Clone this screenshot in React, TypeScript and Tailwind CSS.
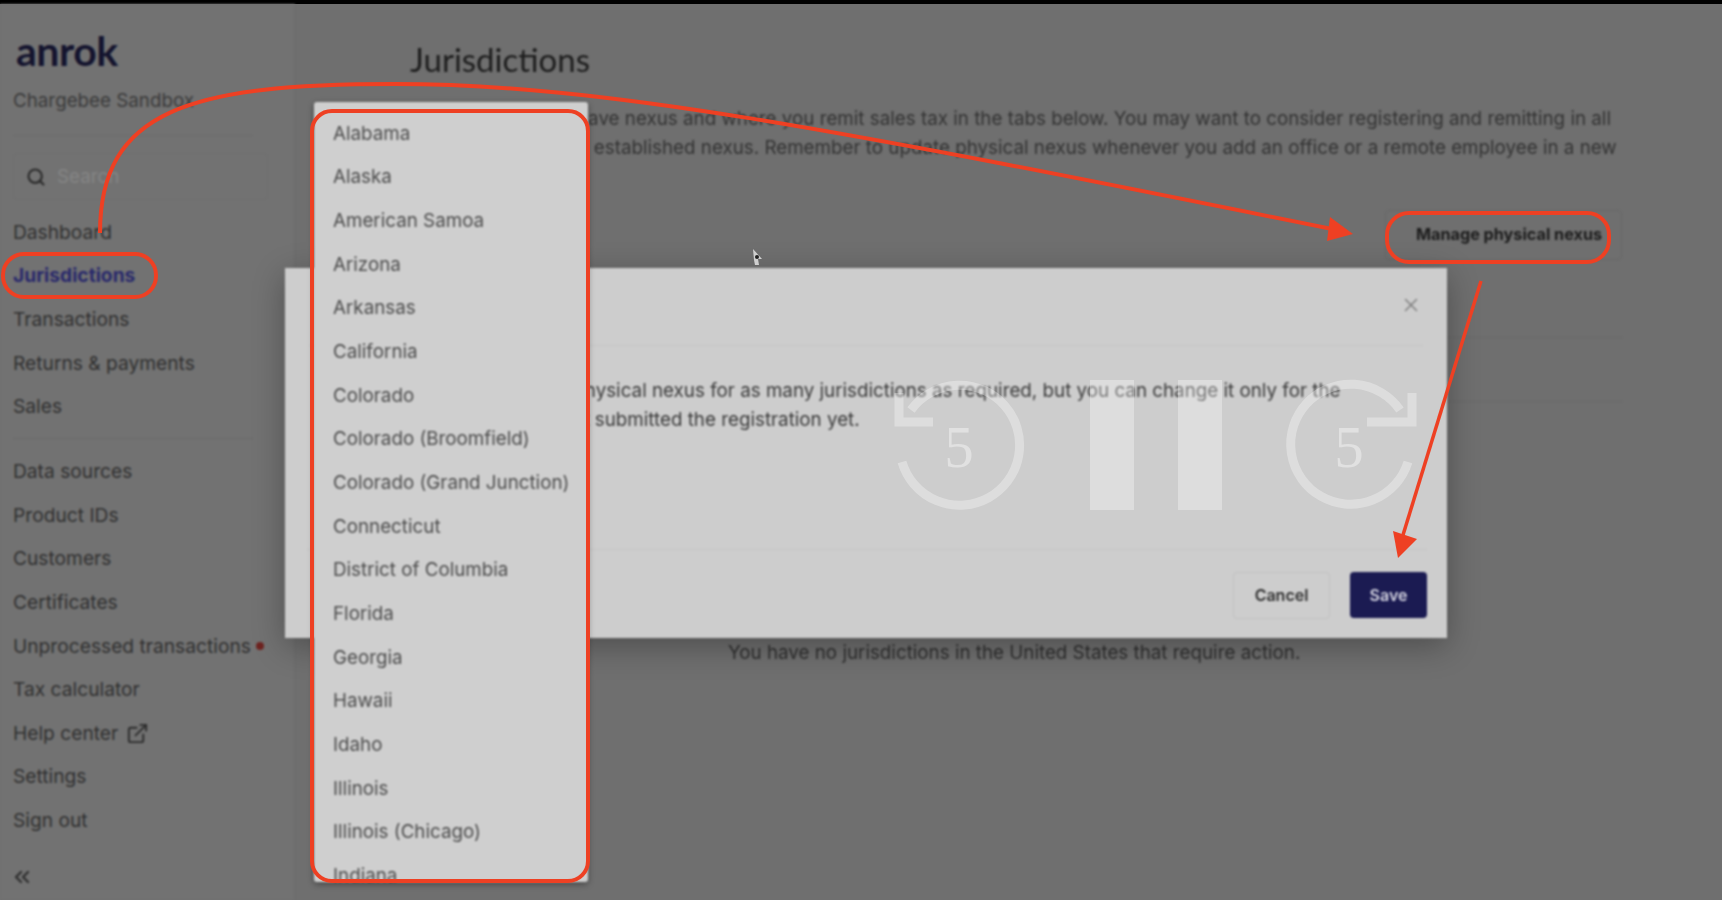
import { ChevronsLeft, ExternalLink, Search, X } from "lucide-react";

const topNav = ["Dashboard", "Jurisdictions", "Transactions", "Returns & payments", "Sales"];
const bottomNav = ["Data sources", "Product IDs", "Customers", "Certificates", "Unprocessed transactions", "Tax calculator", "Help center", "Settings", "Sign out"];
const states = [
  "Alabama", "Alaska", "American Samoa", "Arizona", "Arkansas", "California", "Colorado",
  "Colorado (Broomfield)", "Colorado (Grand Junction)", "Connecticut", "District of Columbia",
  "Florida", "Georgia", "Hawaii", "Idaho", "Illinois", "Illinois (Chicago)", "Indiana",
];

const NavItem = ({ label }: { label: string }) => {
  const active = label === "Jurisdictions";
  return (
    <div className={`flex h-[43.67px] items-center gap-2 whitespace-nowrap text-[19.2px] ${active ? "font-bold text-[#29296b]" : "text-[#303030]"}`}>
      <span>{label}</span>
      {label === "Help center" && <ExternalLink size={23} strokeWidth={2} className="text-[#2c2c2c]" />}
      {label === "Unprocessed transactions" && <span className="-ml-[3px] h-2 w-2 rounded-full bg-[#6e2320]" />}
    </div>
  );
};

const Sidebar = () => (
  <aside className="flex w-[295px] shrink-0 flex-col border-r border-[#6c6c6c] bg-[#727272] pl-[13px]">
    <div className="mt-[21px] ml-[3px] h-[52px] font-['Lato',sans-serif] text-[41px] font-bold leading-[52px] tracking-[-0.5px] text-[#14142e]">anrok</div>
    <div className="mt-[10px] text-[#3a3a3a]">Chargebee Sandbox</div>
    <div className="mt-[20px] h-px w-[240px] bg-[#6b6b6b]" />
    <div className="mt-[17px] flex h-[47px] w-[255px] items-center gap-[11px] rounded border border-[#6f6f6f] pl-[12px] text-[#858585]">
      <Search size={20} strokeWidth={2.6} className="text-[#2c2c2c]" />
      <span>Search</span>
    </div>
    <nav className="mt-[10px]">
      {topNav.map((item) => <NavItem key={item} label={item} />)}
    </nav>
    <div className="mt-[10px] mb-[10px] h-px w-[240px] bg-[#696969]" />
    <nav>
      {bottomNav.map((item) => <NavItem key={item} label={item} />)}
    </nav>
    <ChevronsLeft size={24} strokeWidth={2.4} className="mt-[23px] -ml-[3px] text-[#303030]" />
  </aside>
);

const Page = () => (
  <main className="flex-1 pl-[115px] pr-[100px] text-[#333]">
    <h1 className="mt-[31px] h-[48px] font-['Lato',sans-serif] text-[33px] leading-[48px] text-[#1d1d1d]">Jurisdictions</h1>
    <p className="mt-[21px] whitespace-nowrap leading-[29.2px]">
      Review where you have nexus and where you remit sales tax in the tabs below. You may want to consider registering and remitting in all
      <br />
      states where you've established nexus. Remember to update physical nexus whenever you add an office or a remote employee in a new
      <br />
      state.
    </p>
    <div className="mt-[18px] flex justify-end">
      <button className="h-[50px] w-[237px] rounded border border-[#676767] pl-[11px] text-[16.2px] font-bold text-[#1c1c1c]">Manage physical nexus</button>
    </div>
    <div className="mt-[77px] ml-auto h-px w-[500px] bg-[#686868]" />
    <div className="mt-[63px] ml-auto h-px w-[500px] bg-[#686868]" />
    <p className="mt-[237px] pl-[318px] whitespace-nowrap text-[#2e2e2e]">You have no jurisdictions in the United States that require action.</p>
  </main>
);

const Modal = () => (
  <div className="absolute left-[285px] top-[268px] flex h-[370px] w-[1162px] flex-col bg-[#cdcdcd] text-[#3a3a3a] shadow-[0_8px_30px_rgba(0,0,0,0.3)]">
    <div className="mx-[24px] flex h-[78px] shrink-0 items-center justify-end border-b border-[#c4c4c4]">
      <X size={22} strokeWidth={1.6} className="-mt-[4px] mr-[1px] text-[#7f7f7f]" />
    </div>
    <p className="flex-1 px-[35px] pt-[30px] leading-[29px] whitespace-nowrap">
      You can declare and update physical nexus for as many jurisdictions as required, but you can change it only for the
      <br />
      jurisdictions when you haven't submitted the registration yet.
    </p>
    <div className="ml-[22px] mr-[20px] flex h-[89px] shrink-0 items-center justify-end gap-[20px] border-t border-[#c4c4c4] pt-[2px]">
      <button className="h-[47px] w-[97px] rounded-sm border border-[#c0c0c0] text-[16px] font-semibold text-[#2e2e2e]">Cancel</button>
      <button className="h-[46px] w-[77px] rounded-sm bg-[#1b1b52] text-[16px] font-semibold text-[#d8d8e4]">Save</button>
    </div>
  </div>
);

const StateMenu = () => (
  <div className="absolute left-[314px] top-[102px] h-[780px] w-[274px] overflow-hidden rounded-[3px] bg-[#cfcfcf] pl-[19px] pt-[10px] text-[#4c4c4c] shadow-[0_2px_6px_rgba(0,0,0,0.4)]">
    {states.map((state) => (
      <div key={state} className="flex h-[43.67px] items-center whitespace-nowrap">{state}</div>
    ))}
  </div>
);

// player controls burned into the recording
const PlayerControls = () => (
  <svg className="pointer-events-none absolute left-0 top-0" width="1722" height="900" fill="none">
    <g stroke="#ffffff" strokeOpacity="0.33" strokeWidth="9">
      <path d="M902 462 A60 60 0 1 0 911 410" />
      <path d="M899 393 V422 H933" />
      <path d="M1408 462 A60 60 0 1 1 1400 410" />
      <path d="M1412 393 V422 H1367" />
    </g>
    <rect x="1090" y="380" width="44" height="130" fill="#ffffff" fillOpacity="0.33" />
    <rect x="1178" y="380" width="44" height="130" fill="#ffffff" fillOpacity="0.33" />
    <text x="959" y="467" textAnchor="middle" fontFamily="'Liberation Serif', serif" fontSize="59" fill="#ffffff" fillOpacity="0.4">5</text>
    <text x="1349" y="467" textAnchor="middle" fontFamily="'Liberation Serif', serif" fontSize="59" fill="#ffffff" fillOpacity="0.4">5</text>
  </svg>
);

// red annotations drawn on top of the recording
const Annotations = () => (
  <svg className="pointer-events-none absolute left-0 top-0" width="1722" height="900" fill="none">
    <g stroke="#ee4023" strokeWidth="4">
      <rect x="3" y="254" width="153" height="43" rx="21" />
      <rect x="312" y="111" width="276" height="770" rx="20" />
      <rect x="1387" y="213" width="222" height="49" rx="22" />
      <path d="M100 233 C100 110 190 84 395 84 C600 84 830 128 1332 229" />
      <path d="M1481 281 L1403 535" strokeWidth="3.5" />
    </g>
    <path d="M1330 217 L1353 234 L1327 241 Z" fill="#ee4023" />
    <path d="M1393 531 L1417 539 L1398 558 Z" fill="#ee4023" />
  </svg>
);

export default function App() {
  return (
    <div className="relative h-[900px] w-[1722px] overflow-hidden bg-[#6f6f6f] font-['Inter',sans-serif] text-[18.8px]">
      <div className="h-1 bg-black" />
      <div className="relative flex h-[896px] blur-[0.9px]">
        <Sidebar />
        <Page />
      </div>
      <div className="absolute inset-0 top-0 blur-[0.9px]">
        <Modal />
        <StateMenu />
      </div>
      <PlayerControls />
      <svg className="absolute left-[752px] top-[248px]" width="12" height="18" viewBox="0 0 12 18">
        <path d="M1 1 L10 11 L6 11 L7 17 L3 17 L2 12 Z" fill="#cfcfcf" />
        <circle cx="5" cy="9" r="2" fill="#222" />
      </svg>
      <Annotations />
    </div>
  );
}
